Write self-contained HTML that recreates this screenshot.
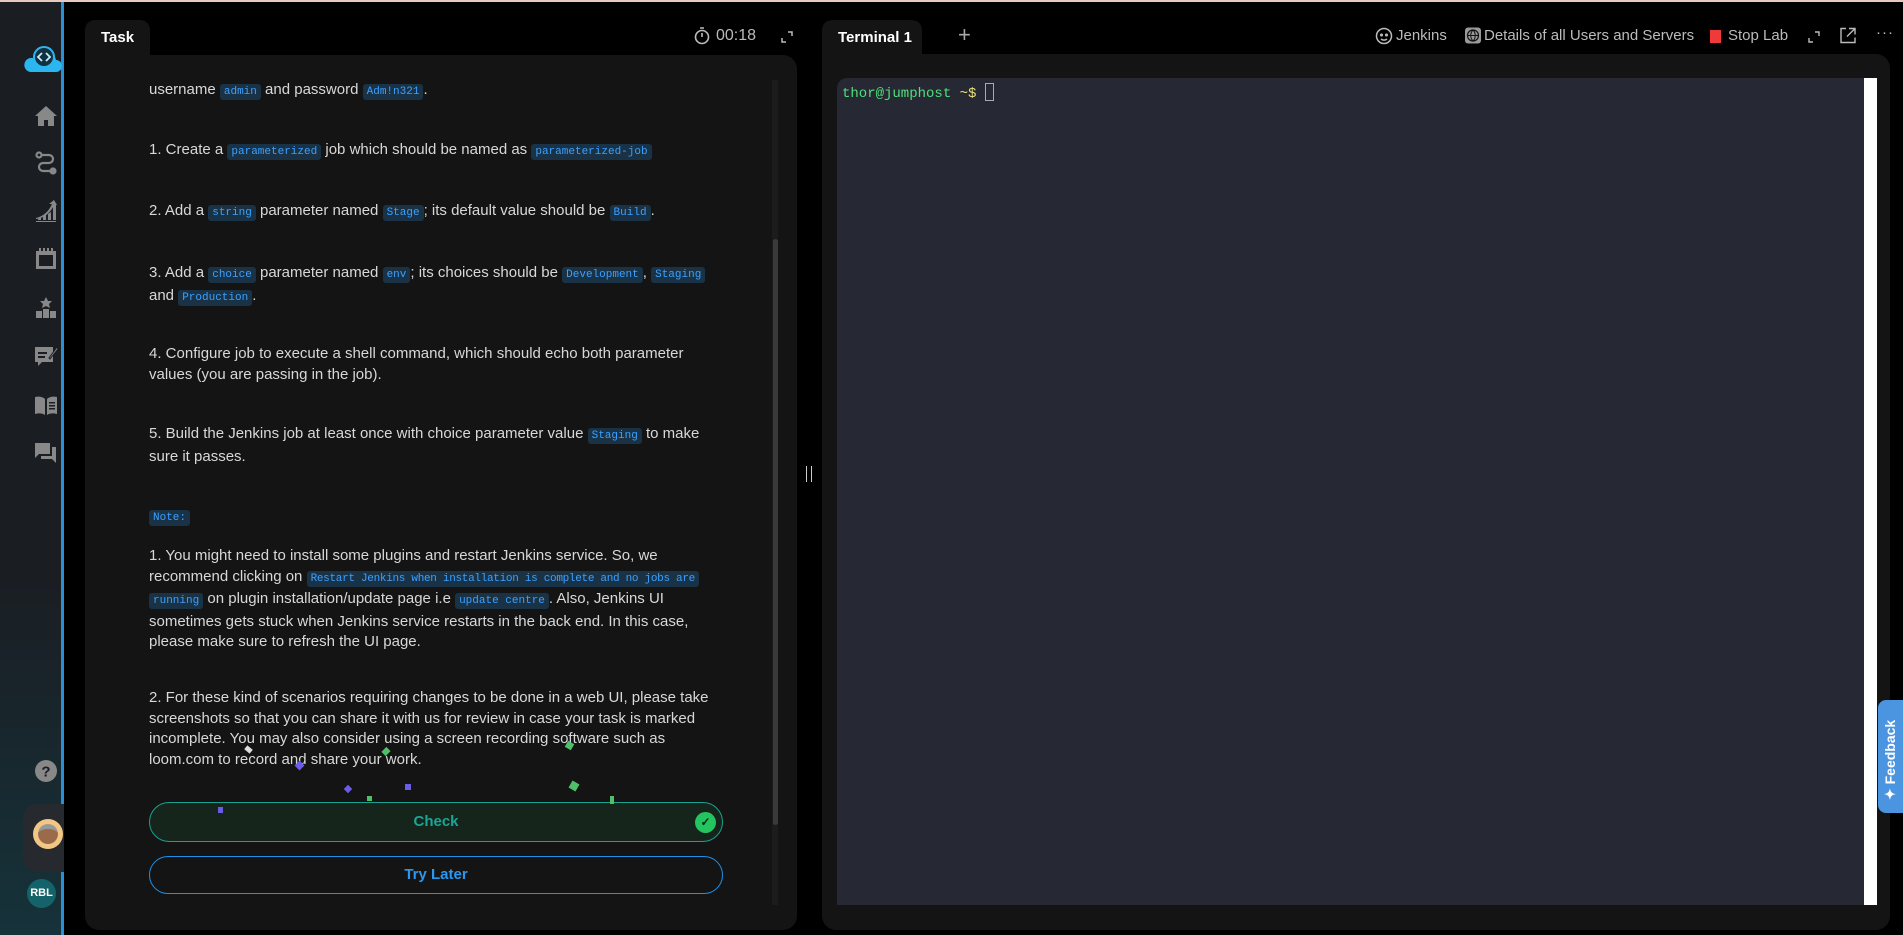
<!DOCTYPE html>
<html><head><meta charset="utf-8"><style>
*{margin:0;padding:0;box-sizing:border-box}
body{width:1903px;height:935px;background:#000;font-family:"Liberation Sans",sans-serif;overflow:hidden;position:relative;color:#ddd}
.topline{position:absolute;left:0;top:0;width:1903px;height:2px;background:#e8c9c0}
.side{position:absolute;left:0;top:2px;width:64px;height:933px;background:linear-gradient(#1a1d22 0%,#1a1d22 60%,#16323a 100%);border-right:3px solid #2a8fd6}
.ic{position:absolute;left:34px;width:24px;height:24px}
.tab{position:absolute;top:20px;height:36px;background:#141414;border-radius:10px 10px 0 0;color:#fff;font-weight:bold;font-size:15px;padding:9px 16px;white-space:nowrap}
.panel{position:absolute;background:#141414}
.txt{position:absolute;left:149px;width:580px;font-size:15px;line-height:20.5px;color:#d8d8d8}
code{font-family:"Liberation Mono",monospace;font-size:11px;color:#3ba0ff;background:#1a3246;padding:2px 4px;border-radius:3px}
.hdr{position:absolute;top:27px;font-size:15px;color:#bbb;white-space:nowrap}
</style></head><body>
<div class="topline"></div>
<div class="side">
 <svg class="ic" style="left:22px;top:42px;width:40px;height:30px" viewBox="0 0 40 30"><path d="M8 28h26a6 6 0 0 0 0-12 12 12 0 0 0-23-2A7 7 0 0 0 8 28z" fill="#2bb6f0"/><circle cx="22" cy="13" r="10" fill="#12303f" stroke="#2bb6f0" stroke-width="2"/><path d="M20 9l-4 4 4 4M24 9l4 4-4 4" stroke="#bfefff" stroke-width="1.8" fill="none"/></svg>
 <svg class="ic" style="top:102px" viewBox="0 0 24 24" fill="#888"><path d="M12 2L1 12h3v10h6v-6h4v6h6V12h3z"/></svg>
 <svg class="ic" style="top:149px" viewBox="0 0 24 24" fill="none" stroke="#888" stroke-width="2.2"><circle cx="5" cy="4" r="2.5"/><path d="M7 4h8a4 4 0 0 1 0 8H9a4 4 0 0 0 0 8h8"/><circle cx="19" cy="20" r="2.5" fill="#888"/></svg>
 <svg class="ic" style="top:198px" viewBox="0 0 24 24" fill="#888"><path d="M2 22h20v-1H2zM4 20h3v-3l-3 2zM9 20h3v-6l-3 2zM14 20h3v-8l-3 2zM19 20h3V4l-3 1z"/><path d="M2 18c8-2 13-7 16-14l-3 0 5-4 3 5h-3C17 12 11 18 2 19z"/></svg>
 <svg class="ic" style="top:245px" viewBox="0 0 24 24" fill="#888"><path d="M2 4h20v18H2zM5 8v11h14V8z"/><path d="M5 1h2v5H5zM9 1h2v5H9zM13 1h2v5h-2zM17 1h2v5h-2z"/></svg>
 <svg class="ic" style="top:294px" viewBox="0 0 24 24" fill="#888"><path d="M12 1l2 4h4l-3 3 1 4-4-2-4 2 1-4-3-3h4z"/><path d="M2 15h6v7H2zM9 13h6v9H9zM16 15h6v7h-6z"/></svg>
 <svg class="ic" style="top:342px" viewBox="0 0 24 24" fill="#888"><path d="M1 3h18v15H8l-4 4v-4H1z"/><path d="M4 8h9v2H4zM4 12h7v2H4z" fill="#1a1d22"/><path d="M15 14l8-11 1 2-8 10z" stroke="#1a1d22"/></svg>
 <svg class="ic" style="top:391px" viewBox="0 0 24 24" fill="#888"><path d="M1 4c4-1 8 0 10 2v16c-3-2-6-2-10-1zM13 6c2-2 6-3 10-2v17c-4-1-7-1-10 1z"/><path d="M15 9h6v1.5h-6zM15 12h6v1.5h-6zM15 15h6v1.5h-6z" fill="#1a1d22"/></svg>
 <svg class="ic" style="top:439px" viewBox="0 0 24 24" fill="#888"><path d="M1 2h15v11H5l-4 4zM18 6h4v16l-4-4H7v-3h11z"/></svg>
 <svg class="ic" style="top:757px" viewBox="0 0 24 24"><circle cx="12" cy="12" r="11" fill="#888"/><text x="12" y="17.5" font-size="15" font-weight="bold" text-anchor="middle" fill="#1a1d22" font-family="Liberation Sans">?</text></svg>
 <div style="position:absolute;left:23px;top:802px;width:41px;height:68px;background:#262a2f;border-radius:14px 0 0 14px"></div>
 <div style="position:absolute;left:33px;top:817px;width:30px;height:30px;border-radius:50%;background:#f2c785"><div style="margin:5px;width:20px;height:20px;border-radius:50%;background:#9b6a4a;border-top:5px solid #999"></div></div>
 <div style="position:absolute;left:27px;top:877px;width:29px;height:29px;border-radius:50%;background:#14636b;color:#fff;font-size:11px;font-weight:bold;text-align:center;line-height:29px">RBL</div>
</div>
<div style="position:absolute;left:67px;top:2px;width:30px;height:933px;background:#000"></div>

<div class="tab" style="left:85px;width:65px">Task</div>
<div class="panel" style="left:85px;top:55px;width:712px;height:875px;border-radius:0 14px 14px 14px"></div>
<svg style="position:absolute;left:694px;top:27px" width="16" height="18" viewBox="0 0 16 18" fill="none" stroke="#bbb" stroke-width="1.6"><circle cx="8" cy="10" r="6.5"/><path d="M8 10V6M6 1h4"/></svg>
<div class="hdr" style="left:716px;font-size:16px">00:18</div>
<svg style="position:absolute;left:780px;top:30px" width="14" height="14" viewBox="0 0 14 14" fill="none" stroke="#bbb" stroke-width="1.5"><path d="M8 2h4v4M2 8v4h4"/></svg>

<div class="txt" style="top:80px">username <code>admin</code> and password <code>Adm!n321</code>.</div>
<div class="txt" style="top:140px">1. Create a <code>parameterized</code> job which should be named as <code>parameterized-job</code></div>
<div class="txt" style="top:201px">2. Add a <code>string</code> parameter named <code>Stage</code>; its default value should be <code>Build</code>.</div>
<div class="txt" style="top:263px">3. Add a <code>choice</code> parameter named <code>env</code>; its choices should be <code>Development</code>, <code>Staging</code> and <code>Production</code>.</div>
<div class="txt" style="top:344px">4. Configure job to execute a shell command, which should echo both parameter values (you are passing in the job).</div>
<div class="txt" style="top:424px">5. Build the Jenkins job at least once with choice parameter value <code>Staging</code> to make sure it passes.</div>
<div class="txt" style="top:506px"><code>Note:</code></div>
<div class="txt" style="top:546px">1. You might need to install some plugins and restart Jenkins service. So, we recommend clicking on <code style="letter-spacing:-0.3px">Restart Jenkins when installation is complete and no jobs are</code> <code>running</code> on plugin installation/update page i.e <code>update centre</code>. Also, Jenkins UI sometimes gets stuck when Jenkins service restarts in the back end. In this case, please make sure to refresh the UI page.</div>
<div class="txt" style="top:688px">2. For these kind of scenarios requiring changes to be done in a web UI, please take screenshots so that you can share it with us for review in case your task is marked incomplete. You may also consider using a screen recording software such as loom.com to record and share your work.</div>

<div style="position:absolute;left:772px;top:80px;width:6px;height:825px;background:#1c1c1c"></div>
<div style="position:absolute;left:773px;top:239px;width:5px;height:586px;background:#3a3a3a;border-radius:3px"></div>

<div style="position:absolute;left:149px;top:802px;width:574px;height:40px;border:1.5px solid #1aa08f;border-radius:20px;background:#16251b;color:#1aa595;font-weight:bold;font-size:15px;text-align:center;line-height:37px">Check
 <div style="position:absolute;right:6px;top:9px;width:21px;height:21px;border-radius:50%;background:#22c55e;color:#0e2a14;font-size:12px;line-height:21px">✓</div></div>
<div style="position:absolute;left:149px;top:856px;width:574px;height:38px;border:1.5px solid #1e90e8;border-radius:19px;color:#2a98f0;font-weight:bold;font-size:15px;text-align:center;line-height:35px">Try Later</div>
<div style="position:absolute;left:245px;top:747px;width:7px;height:5px;background:#ddd;transform:rotate(40deg)"></div>
<div style="position:absolute;left:296px;top:762px;width:7px;height:7px;background:#6b5ce7;transform:rotate(45deg)"></div>
<div style="position:absolute;left:383px;top:748px;width:6px;height:7px;background:#4ec06a;transform:rotate(45deg)"></div>
<div style="position:absolute;left:345px;top:786px;width:6px;height:6px;background:#6b5ce7;transform:rotate(45deg)"></div>
<div style="position:absolute;left:405px;top:784px;width:6px;height:6px;background:#6b5ce7"></div>
<div style="position:absolute;left:566px;top:742px;width:7px;height:7px;background:#4ec06a;transform:rotate(30deg)"></div>
<div style="position:absolute;left:570px;top:782px;width:8px;height:8px;background:#4ec06a;transform:rotate(30deg)"></div>
<div style="position:absolute;left:610px;top:796px;width:4px;height:8px;background:#4ec06a"></div>
<div style="position:absolute;left:367px;top:796px;width:5px;height:5px;background:#4ec06a"></div>
<div style="position:absolute;left:218px;top:807px;width:5px;height:6px;background:#6b5ce7"></div>

<div style="position:absolute;left:806px;top:466px;width:6px;height:16px;border-left:1.5px solid #ccc;border-right:1.5px solid #ccc"></div>

<div class="tab" style="left:822px;width:100px">Terminal 1</div>
<div class="hdr" style="left:958px;top:22px;font-size:22px;color:#aaa">+</div>
<div class="panel" style="left:822px;top:54px;width:1068px;height:876px;border-radius:0 14px 14px 14px"></div>
<div style="position:absolute;left:837px;top:78px;width:1040px;height:827px;background:#262833;border-radius:10px 0 0 0"></div>
<div style="position:absolute;left:1864px;top:78px;width:13px;height:827px;background:#fff"></div>
<div style="position:absolute;left:842px;top:83px;font-family:'Liberation Mono',monospace;font-size:14px;color:#4ee07a">thor@jumphost <span style="color:#e8e070">~$</span> <span style="display:inline-block;width:9px;height:18px;border:1px solid #aaa;vertical-align:-4px"></span></div>

<svg style="position:absolute;left:1375px;top:27px" width="18" height="18" viewBox="0 0 18 18" fill="none" stroke="#bbb" stroke-width="1.5"><circle cx="9" cy="9" r="7.5"/><circle cx="6.5" cy="8" r=".8" fill="#bbb"/><circle cx="11.5" cy="8" r=".8" fill="#bbb"/><path d="M6 12c2 1.5 4 1.5 6 0"/></svg>
<div class="hdr" style="left:1396px">Jenkins</div>
<svg style="position:absolute;left:1465px;top:27px" width="16" height="17" viewBox="0 0 16 16"><rect width="16" height="16" rx="3" fill="#999"/><circle cx="8" cy="8" r="5.5" fill="none" stroke="#111" stroke-width="1.2"/><path d="M2.5 8h11M8 2.5c-3 3-3 8 0 11M8 2.5c3 3 3 8 0 11" stroke="#111" fill="none" stroke-width="1"/></svg>
<div class="hdr" style="left:1484px">Details of all Users and Servers</div>
<div style="position:absolute;left:1710px;top:30px;width:11px;height:13px;background:#f03a3a"></div>
<div class="hdr" style="left:1728px">Stop Lab</div>
<svg style="position:absolute;left:1808px;top:31px" width="12" height="12" viewBox="0 0 12 12" fill="none" stroke="#bbb" stroke-width="1.4"><path d="M7 1h4v4M1 7v4h4"/></svg>
<svg style="position:absolute;left:1840px;top:27px" width="16" height="17" viewBox="0 0 16 16" fill="none" stroke="#bbb" stroke-width="1.4"><path d="M6 1H1v14h14v-5M9 1h6v6M15 1L7 9"/></svg>
<div class="hdr" style="left:1876px;top:24px;letter-spacing:1px">···</div>

<div style="position:absolute;left:1878px;top:700px;width:30px;height:113px;background:#4a94e0;border-radius:8px 0 0 8px"><div style="position:absolute;left:4px;top:100px;transform:rotate(-90deg);transform-origin:0 0;color:#fff;font-weight:bold;font-size:14px;white-space:nowrap">✦ Feedback</div></div>
</body></html>
